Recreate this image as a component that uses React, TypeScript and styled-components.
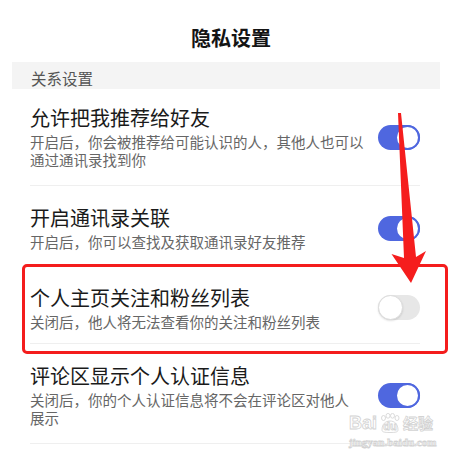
import React from "react";
import styled, { createGlobalStyle } from "styled-components";

const Global = createGlobalStyle`
  html, body { margin: 0; padding: 0; background: #fff; }
  body { font-family: "Noto Sans CJK SC", "Noto Sans", sans-serif; }
`;

const Page = styled.div`
  position: relative;
  width: 462px;
  height: 456px;
  overflow: hidden;
  background: #fff;
`;

const Header = styled.div`
  height: 62px;
  box-sizing: border-box;
  padding-top: 24px;
  text-align: center;
  font-size: 20px;
  line-height: 28px;
  font-weight: 700;
  color: #141414;
`;

const Section = styled.div`
  margin: 0 22px 0 12px;
  height: 27px;
  box-sizing: border-box;
  padding: 6px 0 0 19px;
  background: #f4f4f4;
  font-size: 15.5px;
  line-height: 20px;
  color: #555;
`;

const RowWrap = styled.div`
  position: relative;
`;

const Row = styled.div<{ $top: number; $bottom: number }>`
  margin: 0 42px 0 30px;
  padding: ${(p) => p.$top}px 0 ${(p) => p.$bottom}px;
  border-bottom: 1px solid #efefef;
  display: flex;
  align-items: center;
  justify-content: space-between;
  gap: 12px;
`;

const TextCol = styled.div`
  flex: 1;
  min-width: 0;
`;

const Title = styled.div`
  font-size: 20px;
  line-height: 24px;
  color: #1a1a1a;
`;

const Desc = styled.div`
  width: fit-content;
  margin-top: 3px;
  font-size: 14.5px;
  line-height: 17.5px;
  color: #666;
  white-space: pre-line;
`;

const Track = styled.div<{ $on: boolean }>`
  position: relative;
  flex: none;
  width: 42px;
  height: 25px;
  border-radius: 13px;
  background: ${(p) => (p.$on ? "#4f67df" : "#e7e7e7")};
`;

const Knob = styled.div<{ $on: boolean }>`
  position: absolute;
  top: 0;
  ${(p) => (p.$on ? "right: 0;" : "left: 0;")}
  width: 25px;
  height: 25px;
  box-sizing: border-box;
  border-radius: 50%;
  background: #fff;
  border: ${(p) => (p.$on ? "2px solid #4f67df" : "1px solid #dcdcdc")};
  box-shadow: ${(p) => (p.$on ? "none" : "0 1px 2px rgba(0,0,0,0.12)")};
`;

const Highlight = styled.div`
  position: absolute;
  left: 22px;
  right: 14px;
  top: -2px;
  bottom: -10px;
  border: 3px solid #f41d1d;
  border-radius: 5px;
  pointer-events: none;
`;

const ArrowSvg = styled.svg`
  position: absolute;
  left: 0;
  top: 0;
  pointer-events: none;
`;

const Watermark = styled.div`
  position: absolute;
  left: 349px;
  top: 413px;
  display: flex;
  flex-direction: column;
  align-items: flex-start;
  color: #fff;
  -webkit-text-stroke: 0.8px #d2d2d2;
`;

const MarkTop = styled.div`
  display: flex;
  align-items: center;
  gap: 2px;
  font-family: "Liberation Sans", Arial, sans-serif;
  font-weight: 700;
  font-size: 18px;
  line-height: 20px;
`;

const Paw = styled.span`
  position: relative;
  display: inline-flex;
  align-items: flex-end;
  justify-content: center;
  width: 22px;
  height: 20px;
  font-size: 11px;
  line-height: 13px;
`;

const PawSvg = styled.svg`
  position: absolute;
  left: 0;
  top: 0;
`;

const PawText = styled.span`
  position: relative;
`;

const MarkCn = styled.span`
  font-family: "Noto Sans CJK SC", sans-serif;
  font-size: 15px;
  font-weight: 700;
`;

const MarkUrl = styled.div`
  font-family: "Liberation Serif", serif;
  font-size: 11px;
  line-height: 14px;
  font-weight: 700;
  margin-top: 2px;
`;

type Item = {
  title: string;
  desc: string;
  on: boolean;
  top: number;
  bottom: number;
  highlight?: boolean;
};

const items: Item[] = [
  {
    title: "允许把我推荐给好友",
    desc: "开启后，你会被推荐给可能认识的人，其他人也可以\n通过通讯录找到你",
    on: true,
    top: 17,
    bottom: 17,
  },
  {
    title: "开启通讯录关联",
    desc: "开启后，你可以查找及获取通讯录好友推荐",
    on: true,
    top: 20,
    bottom: 14,
  },
  {
    title: "个人主页关注和粉丝列表",
    desc: "关闭后，他人将无法查看你的关注和粉丝列表",
    on: false,
    top: 20,
    bottom: 13,
    highlight: true,
  },
  {
    title: "评论区显示个人认证信息",
    desc: "关闭后，你的个人认证信息将不会在评论区对他人\n展示",
    on: true,
    top: 20,
    bottom: 17,
  },
];

export default function App() {
  return (
    <Page>
      <Global />
      <Header>隐私设置</Header>
      <Section>关系设置</Section>
      {items.map((it) => (
        <RowWrap key={it.title}>
          <Row $top={it.top} $bottom={it.bottom}>
            <TextCol>
              <Title>{it.title}</Title>
              <Desc>{it.desc}</Desc>
            </TextCol>
            <Track $on={it.on}>
              <Knob $on={it.on} />
            </Track>
          </Row>
          {it.highlight && <Highlight />}
        </RowWrap>
      ))}
      <ArrowSvg width="462" height="456" viewBox="0 0 462 456">
        <polygon
          points="398,113 401,113 416,257 426,251 411,283 391.5,254 404,258"
          fill="#f51d1d"
        />
      </ArrowSvg>
      <Watermark>
        <MarkTop>
          <span>Bai</span>
          <Paw>
            <PawSvg width="22" height="20" viewBox="0 0 22 20">
              <g fill="#fff" stroke="#d2d2d2" strokeWidth="0.8">
                <ellipse cx="4.5" cy="5" rx="2" ry="2.5" />
                <ellipse cx="9" cy="2.8" rx="2" ry="2.4" />
                <ellipse cx="13.5" cy="2.8" rx="2" ry="2.4" />
                <ellipse cx="18" cy="5" rx="2" ry="2.5" />
                <path d="M3 17 C3 11 6.5 8 11 8 C15.5 8 19 11 19 17 C19 19 17 19.5 11 19.5 C5 19.5 3 19 3 17 Z" />
              </g>
            </PawSvg>
            <PawText>du</PawText>
          </Paw>
          <MarkCn>经验</MarkCn>
        </MarkTop>
        <MarkUrl>jingyan.baidu.com</MarkUrl>
      </Watermark>
    </Page>
  );
}
